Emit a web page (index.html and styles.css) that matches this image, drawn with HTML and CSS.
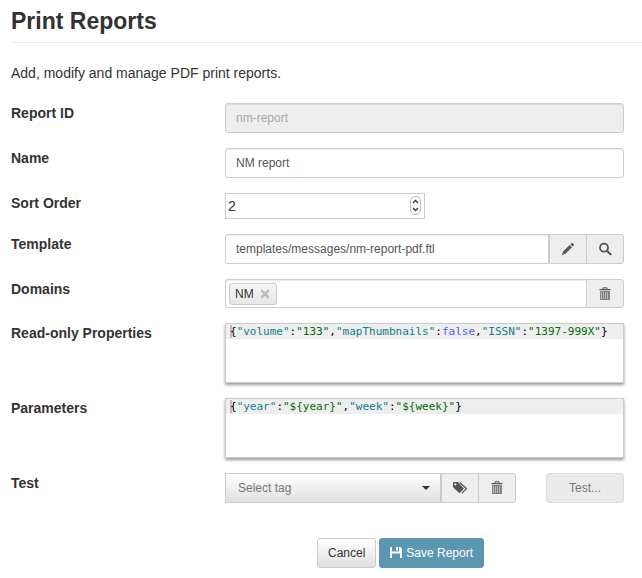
FILE: index.html
```html
<!DOCTYPE html>
<html lang="en">
<head>
<meta charset="utf-8">
<title>Print Reports</title>
<link rel="stylesheet" href="styles.css">
</head>
<body>
<svg class="sprite" aria-hidden="true">
  <symbol id="trash" viewBox="0 0 14 14">
    <path fill="none" stroke="currentColor" d="M5 2V.8h4V2"/>
    <path fill="currentColor" d="M1.500 2h11v1.200h-11z"/>
    <path fill="currentColor" fill-opacity=".35" d="M2.500 4h9v9h-9z"/>
    <path fill="none" stroke="currentColor" d="M2.500 4.500h9v8h-9zM4.500 5v7M6.500 5v7M8.500 5v7M10.500 5v7" stroke-width=".6"/>
  </symbol>
</svg>
<main class="page">
  <header class="page-header"><h1>Print Reports</h1></header>
  <p class="intro">Add, modify and manage PDF print reports.</p>

  <form class="form">
    <div class="row">
      <label for="report-id">Report ID</label>
      <input class="text-input" id="report-id" type="text" value="nm-report" disabled>
    </div>
    <div class="row">
      <label for="name">Name</label>
      <input class="text-input" id="name" type="text" value="NM report">
    </div>
    <div class="row">
      <label for="sort-order">Sort Order</label>
      <div class="number-field">
        <input id="sort-order" type="number" value="2">
        <svg class="spinner" width="11" height="19" viewBox="0 0 11 19" aria-hidden="true">
          <rect x=".5" y=".5" width="10" height="18" rx="4.500" fill="#fff" stroke="#bbb"/>
          <path d="M3 7l2.500-2.500L8 7M3 12l2.500 2.500L8 12" fill="none" stroke="#333" stroke-width="1.300"/>
        </svg>
      </div>
    </div>
    <div class="row">
      <label for="template">Template</label>
      <div class="group">
        <input class="text-input" id="template" type="text" value="templates/messages/nm-report-pdf.ftl">
        <button class="addon" type="button" aria-label="Edit template">
          <svg width="14" height="14" viewBox="0 0 14 14"><path fill="currentColor" d="M.8 13.200l1-3.400L8.700 3l2.200 2.200L4.200 12zM9.400 2.300l1.100-1.100q.6-.5 1.200 0l1 1q.5.600 0 1.200l-1.100 1.100z"/><path d="M1.700 11l1.300 1.300" stroke="#eee" stroke-width=".8"/></svg>
        </button>
        <button class="addon" type="button" aria-label="Find template">
          <svg width="14" height="14" viewBox="0 0 14 14"><circle cx="6" cy="5.700" r="4" fill="none" stroke="currentColor" stroke-width="1.800"/><path d="M9 8.700l3.500 3.500" stroke="currentColor" stroke-width="2.200" stroke-linecap="round"/></svg>
        </button>
      </div>
    </div>
    <div class="row">
      <label for="domains">Domains</label>
      <div class="group domains">
        <div class="tag-box">
          <span class="tag">NM
            <button type="button" aria-label="Remove NM"><svg width="10" height="10" viewBox="0 0 10 10"><path d="M1.200 1.200l7.600 7.600M8.800 1.200L1.200 8.800" stroke="#bbb" stroke-width="2.400"/></svg></button>
          </span>
          <input id="domains" type="text">
        </div>
        <button class="addon" type="button" aria-label="Clear domains"><svg width="14" height="14"><use href="#trash"/></svg></button>
      </div>
    </div>
    <div class="row">
      <label for="properties">Read-only Properties</label>
      <div class="editor">
        <pre><span class="key">"volume"</span>:<span class="str">"133"</span>,<span class="key">"mapThumbnails"</span>:<span class="bool">false</span>,<span class="key">"ISSN"</span>:<span class="str">"1397-999X"</span>}</pre>
        <textarea id="properties"></textarea>
      </div>
    </div>
    <div class="row">
      <label for="parameters">Parameters</label>
      <div class="editor">
        <pre><span class="key">"year"</span>:<span class="str">"${year}"</span>,<span class="key">"week"</span>:<span class="str">"${week}"</span>}</pre>
        <textarea id="parameters"></textarea>
      </div>
    </div>
    <div class="row">
      <label for="tag">Test</label>
      <div class="test">
        <div class="group">
          <div class="select-field">
            <select id="tag"><option>Select tag</option></select>
            <svg class="caret" width="8" height="4" viewBox="0 0 8 4" aria-hidden="true"><path fill="#333" d="M0 0h8L4 4z"/></svg>
          </div>
          <button class="addon" type="button" aria-label="Tags">
            <svg width="16" height="14" viewBox="0 0 16 14"><path fill="currentColor" fill-rule="evenodd" d="M1 1h5l6 6.500L7.500 12.300 1 6.200zM3.300 2.200a1.100 1.100 0 1 0 .1 2.200 1.100 1.100 0 0 0-.1-2.200z"/><path fill="none" stroke="currentColor" stroke-width="1.200" d="M7.800 1.500l6.700 6-4.700 4.800"/></svg>
          </button>
          <button class="addon" type="button" aria-label="Clear tag"><svg width="14" height="14"><use href="#trash"/></svg></button>
        </div>
        <button class="btn btn-test" type="button" disabled>Test...</button>
      </div>
    </div>
    <div class="actions">
      <button class="btn" type="button">Cancel</button>
      <button class="btn btn-primary" type="submit">
        <svg width="12" height="12" viewBox="0 0 12 12"><path fill="currentColor" fill-rule="evenodd" d="M0 0h2v4.500h7V0h1.300L12 1.700V11h-2V6.500H2V11H0zM6 0h2v3.500H6z"/></svg>
        Save Report
      </button>
    </div>
  </form>
</main>
</body>
</html>
```
FILE: styles.css
```css
* { box-sizing: border-box; }

body {
  margin: 0;
  background: #fff;
  color: #333;
  font: 14px/20px "Liberation Sans", Arial, sans-serif;
}

input, select, button, textarea { font: inherit; color: inherit; }
button { cursor: pointer; }
svg { display: block; }
.sprite { position: absolute; width: 0; height: 0; }

.page { padding: 8px 18px 10px 11px; }

.page-header {
  margin-right: -18px;
  padding-bottom: 8px;
  border-bottom: 1px solid #eee;
}

h1 { margin: 0; font-size: 23px; line-height: 26px; }

.intro { margin: 20px 0; }

.form { display: grid; gap: 15px; }

.row {
  display: grid;
  grid-template-columns: 214px minmax(0, 1fr);
  align-items: start;
}

.row label { font-weight: bold; }

.text-input {
  width: 100%;
  min-width: 0;
  height: 30px;
  padding: 4px 10px;
  border: 1px solid #ccc;
  border-radius: 3px;
  background: #fff;
  box-shadow: inset 0 1px 1px rgba(0, 0, 0, .075);
  color: #555;
  font-size: 12px;
}

.text-input:disabled { background: #eee; color: #aaa; }

.number-field { position: relative; width: 200px; }

.number-field input {
  display: block;
  width: 100%;
  height: 26px;
  padding: 2px;
  border: 1px solid #ccc;
  appearance: textfield;
}

.number-field input::-webkit-inner-spin-button { appearance: none; }

.spinner { position: absolute; top: 3px; right: 4px; }

.group { display: flex; flex: 1; min-width: 0; }
.group > .text-input { flex: 1; border-radius: 3px 0 0 3px; }

.addon {
  display: flex;
  flex: none;
  align-items: center;
  justify-content: center;
  width: 38px;
  padding: 0;
  border: 1px solid #ccc;
  background: #eee;
  color: #555;
}

.addon + .addon { margin-left: -1px; }
.addon:last-child { border-radius: 0 3px 3px 0; }

.domains { height: 29px; }

.tag-box {
  display: flex;
  flex: 1;
  min-width: 0;
  padding: 3px;
  border: 1px solid #ccc;
  border-right: 0;
  border-radius: 3px 0 0 3px;
  box-shadow: inset 0 1px 1px rgba(0, 0, 0, .075);
}

.tag-box input { flex: 1; min-width: 0; padding: 0; border: 0; outline: 0; }

.tag {
  display: flex;
  align-items: center;
  gap: 6px;
  height: 22px;
  padding: 0 6px 0 5px;
  border: 1px solid #ccc;
  border-radius: 3px;
  background: linear-gradient(#f6f6f6, #e6e6e6);
  font-size: 12px;
}

.tag button { padding: 0; border: 0; background: none; }

.editor {
  position: relative;
  height: 60px;
  border: 1px solid #ccc;
  background: #fff;
  box-shadow: 0 2px 3px rgba(0, 0, 0, .4);
}

.editor pre {
  margin: 0;
  padding-left: 4px;
  background: #eee;
  color: #000;
  font: 11px/15px "DejaVu Sans Mono", monospace;
}

.editor pre::before { content: "{"; box-shadow: inset 2px 0 #bbb; }

.editor textarea {
  position: absolute;
  inset: 0;
  width: 100%;
  height: 100%;
  border: 0;
  opacity: 0;
  resize: none;
}

.key { color: #10808c; }
.str { color: #036a07; }
.bool { color: #4a66f0; }

.test { display: flex; gap: 30px; }

.select-field { position: relative; flex: 1; min-width: 0; }

.select-field select {
  display: block;
  width: 100%;
  height: 30px;
  padding: 0 24px 0 12px;
  border: 1px solid #ccc;
  border-radius: 0;
  background: linear-gradient(#fff, #e0e0e0);
  color: #777;
  font-size: 12px;
  appearance: none;
}

.caret { position: absolute; top: 13px; right: 11px; pointer-events: none; }

.btn {
  display: flex;
  align-items: center;
  justify-content: center;
  gap: 4px;
  height: 30px;
  padding: 0 10px;
  border: 1px solid #ccc;
  border-radius: 3px;
  background: linear-gradient(#fff, #e0e0e0);
  font-size: 12px;
}

.btn-test {
  width: 78px;
  border-color: #ddd;
  background: #ebebeb;
  color: #777;
}

.btn-primary { border-color: #5a96b0; background: #5c97b2; color: #fff; }

.actions {
  display: flex;
  justify-content: center;
  gap: 3px;
  margin: 20px 0 0 166px;
}
```
